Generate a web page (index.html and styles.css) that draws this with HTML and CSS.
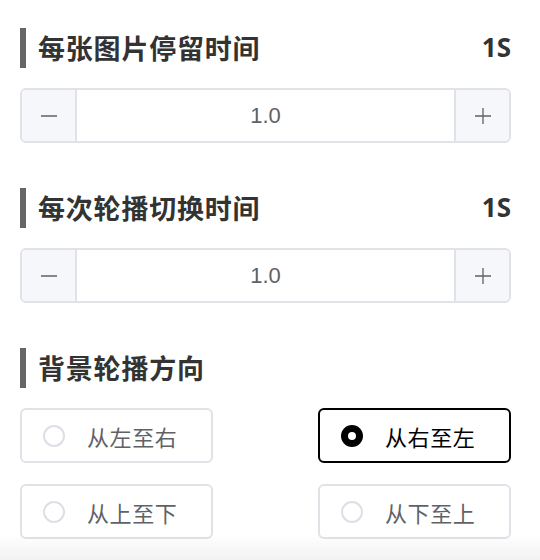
FILE: index.html
```html
<!DOCTYPE html>
<html lang="zh">
<head>
<meta charset="utf-8">
<title>轮播设置</title>
<link rel="stylesheet" href="styles.css">
</head>
<body>
<div class="panel">
  <section class="section">
    <div class="section-head">
      <h2 class="title">每张图片停留时间</h2>
      <span class="value">1S</span>
    </div>
    <div class="stepper">
      <button class="step-btn" type="button" aria-label="减少">
        <svg width="18" height="18" viewBox="0 0 18 18"><path d="M1 9h16" stroke="#606266" stroke-width="1.3"/></svg>
      </button>
      <div class="step-val">1.0</div>
      <button class="step-btn" type="button" aria-label="增加">
        <svg width="18" height="18" viewBox="0 0 18 18"><path d="M1 9h16M9 1v16" stroke="#606266" stroke-width="1.3"/></svg>
      </button>
    </div>
  </section>

  <section class="section">
    <div class="section-head">
      <h2 class="title">每次轮播切换时间</h2>
      <span class="value">1S</span>
    </div>
    <div class="stepper">
      <button class="step-btn" type="button" aria-label="减少">
        <svg width="18" height="18" viewBox="0 0 18 18"><path d="M1 9h16" stroke="#606266" stroke-width="1.3"/></svg>
      </button>
      <div class="step-val">1.0</div>
      <button class="step-btn" type="button" aria-label="增加">
        <svg width="18" height="18" viewBox="0 0 18 18"><path d="M1 9h16M9 1v16" stroke="#606266" stroke-width="1.3"/></svg>
      </button>
    </div>
  </section>

  <section class="section">
    <div class="section-head">
      <h2 class="title">背景轮播方向</h2>
    </div>
    <div class="radios">
      <label class="radio"><span class="dot"></span><span class="radio-text">从左至右</span></label>
      <label class="radio checked"><span class="dot"></span><span class="radio-text">从右至左</span></label>
      <label class="radio"><span class="dot"></span><span class="radio-text">从上至下</span></label>
      <label class="radio"><span class="dot"></span><span class="radio-text">从下至上</span></label>
    </div>
  </section>
</div>
<div class="bottom-fade"></div>
</body>
</html>
```

FILE: styles.css
```css
* { box-sizing: border-box; }

html, body {
  margin: 0;
  padding: 0;
  background: #ffffff;
}

body {
  font-family: "Noto Sans", "Noto Sans CJK SC", "Liberation Sans", sans-serif;
  color: #333333;
}

.panel {
  padding: 28px 29px 0 20px;
  display: flex;
  flex-direction: column;
  gap: 45px;
}

.section {
  display: flex;
  flex-direction: column;
  gap: 20px;
}

.section-head {
  display: flex;
  align-items: center;
  justify-content: space-between;
  height: 40px;
  border-left: 6px solid #666666;
  padding-left: 12px;
}

.title {
  margin: 0;
  font-family: "Noto Sans CJK SC", sans-serif;
  font-size: 27px;
  font-weight: 700;
  color: #333333;
  line-height: 40px;
  letter-spacing: 0.8px;
}

.value {
  font-family: "Noto Sans", "Noto Sans CJK SC", sans-serif;
  font-size: 26px;
  font-weight: 700;
  color: #333333;
  line-height: 40px;
  margin-top: -2px;
}

.stepper {
  display: flex;
  height: 55px;
  border: 2px solid #e0e2e8;
  border-radius: 6px;
  overflow: hidden;
}

.step-btn {
  width: 55px;
  flex: none;
  border: 0;
  margin: 0;
  padding: 0;
  background: #f5f7fa;
  display: flex;
  align-items: center;
  justify-content: center;
}

.step-btn:first-child { border-right: 2px solid #e0e2e8; }
.step-btn:last-child { border-left: 2px solid #e0e2e8; }

.step-val {
  flex: 1;
  display: flex;
  align-items: center;
  justify-content: center;
  font-family: "Liberation Sans", Arial, sans-serif;
  font-size: 22px;
  color: #606266;
}

.radios {
  display: grid;
  grid-template-columns: 193px 193px;
  justify-content: space-between;
  row-gap: 21px;
}

.radio {
  height: 55px;
  border: 2px solid #e0e2e8;
  border-radius: 6px;
  display: flex;
  align-items: center;
  padding-left: 21px;
  gap: 22px;
}

.dot {
  width: 22px;
  height: 22px;
  border-radius: 50%;
  border: 2px solid #dcdfe6;
  background: #ffffff;
  flex: none;
}

.radio-text {
  font-family: "Noto Sans CJK SC", sans-serif;
  font-size: 22px;
  color: #606266;
  letter-spacing: 0.6px;
}

.radio.checked {
  border-color: #000000;
}

.radio.checked .dot {
  border: 7px solid #000000;
}

.radio.checked .radio-text {
  color: #000000;
}

.bottom-fade {
  position: fixed;
  left: 0;
  right: 0;
  bottom: 0;
  height: 26px;
  background: linear-gradient(to bottom, rgba(0,0,0,0), rgba(0,0,0,0.05));
  pointer-events: none;
}
```
